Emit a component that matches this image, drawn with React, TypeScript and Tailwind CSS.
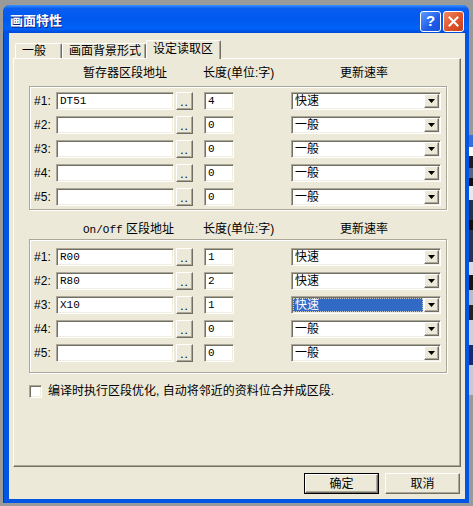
import React from "react";

const ui = "font-['Liberation_Sans','Noto_Sans_CJK_SC',sans-serif]";
const mono = "font-['Liberation_Mono','Noto_Sans_CJK_SC',monospace]";

const sunken =
  "border border-t-[#aca899] border-l-[#aca899] border-b-white border-r-white shadow-[inset_1px_1px_0_#716f64,inset_-1px_-1px_0_#f1efe2] bg-white";
const raised =
  "border border-t-white border-l-white border-b-[#716f64] border-r-[#716f64] shadow-[inset_-1px_-1px_0_#aca899] bg-[#ece9d8]";

type RowData = { addr: string; len: string; rate: string; selected?: boolean };

const bufferRows: RowData[] = [
  { addr: "DT51", len: "4", rate: "快速" },
  { addr: "", len: "0", rate: "一般" },
  { addr: "", len: "0", rate: "一般" },
  { addr: "", len: "0", rate: "一般" },
  { addr: "", len: "0", rate: "一般" },
];

const onOffRows: RowData[] = [
  { addr: "R00", len: "1", rate: "快速" },
  { addr: "R80", len: "2", rate: "快速" },
  { addr: "X10", len: "1", rate: "快速", selected: true },
  { addr: "", len: "0", rate: "一般" },
  { addr: "", len: "0", rate: "一般" },
];

// background app peeking out right of the dialog
const strip: [number, string][] = [
  [135, "#9a9a9a"],
  [12, "#3a6fd8"],
  [9, "#ffffff"],
  [12, "#1b1b2a"],
  [10, "#5a6480"],
  [8, "#101010"],
  [14, "#e8e8f0"],
  [20, "#26324a"],
  [10, "#101010"],
  [32, "#2a3450"],
  [13, "#dcdce8"],
  [15, "#151515"],
  [15, "#b8bccc"],
  [15, "#222222"],
  [25, "#d0d0dc"],
  [20, "#1a2a6a"],
  [30, "#c8c8d8"],
  [111, "#9a9a9a"],
];

function Arrow() {
  return (
    <svg width="7" height="4" viewBox="0 0 7 4">
      <polygon points="0,0 7,0 3.5,4" fill="#000" />
    </svg>
  );
}

function Row({ n, row }: { n: number; row: RowData }) {
  return (
    <div className="flex items-center h-[18px]">
      <span className="w-[22px] text-[12px] leading-[14px]">#{n}:</span>
      <div className={`w-[118px] h-[18px] ${sunken} flex items-center pl-[3px]`}>
        <span className={`${mono} text-[11px] leading-[14px]`}>{row.addr}</span>
      </div>
      <div className={`ml-[2px] w-[17px] h-[18px] ${raised} flex items-end justify-center`}>
        <span className="text-[12px] leading-[13px] tracking-[1px]">..</span>
      </div>
      <div className={`ml-[11px] w-[30px] h-[18px] ${sunken} flex items-center pl-[3px]`}>
        <span className={`${mono} text-[11px] leading-[14px]`}>{row.len}</span>
      </div>
      <div className={`ml-[57px] w-[150px] h-[18px] ${sunken} flex p-[1px]`}>
        <div className="flex-1 flex items-stretch pr-[1px]">
          {row.selected ? (
            <div className="flex-1 bg-[#316ac5] border border-dotted border-[#c9c9c9] flex items-center pl-[1px] text-white text-[12px] leading-[14px]">
              {row.rate}
            </div>
          ) : (
            <div className="flex-1 flex items-center pl-[2px] text-[12px] leading-[14px]">{row.rate}</div>
          )}
        </div>
        <div className={`w-[15px] h-[14px] ${raised} flex items-center justify-center`}>
          <Arrow />
        </div>
      </div>
    </div>
  );
}

function Group({ rows, pt, pb }: { rows: RowData[]; pt: string; pb: string }) {
  return (
    <div
      className={`w-[418px] border border-[#aca899] shadow-[inset_1px_1px_0_#fff,1px_1px_0_#fff] pl-[4px] ${pt} ${pb} flex flex-col gap-[6px]`}
    >
      {rows.map((r, i) => (
        <Row key={i} n={i + 1} row={r} />
      ))}
    </div>
  );
}

function Tab({ label, w, selected }: { label: string; w: string; selected?: boolean }) {
  return (
    <div
      className={`${w} ${
        selected ? "h-[19px] bg-[#ece9d8] pb-[3px]" : "h-[15px] mb-[1px] bg-[#ece9d8]"
      } border-t border-l border-r border-t-white border-l-white border-r-[#716f64] shadow-[inset_-1px_0_0_#aca899] rounded-t-[2px] flex items-center pl-[6px] text-[12px] leading-[14px]`}
    >
      {label}
    </div>
  );
}

export default function App() {
  return (
    <div className={`w-[473px] h-[506px] bg-[#9a9a9a] flex flex-col overflow-hidden ${ui} text-black`}>
      <div className="h-[5px]" />
      <div className="flex">
        <div className="w-[3px]" />
        {/* dialog window */}
        <div className="w-[466px] h-[498px] flex flex-col rounded-t-[7px] overflow-hidden bg-[#0055e5]">
          <div className="h-[28px] flex items-center pt-[4px] pl-[7px] pr-[5px] bg-[linear-gradient(180deg,#3d95ff_0%,#0a5ef0_12%,#0058ee_50%,#0062f8_85%,#0048d8_100%)]">
            <span className="flex-1 text-white font-bold text-[13px] leading-[16px] [text-shadow:1px_1px_0_#0a1e8a]">
              画面特性
            </span>
            <div className="w-[21px] h-[21px] rounded-[3px] border border-white bg-[linear-gradient(135deg,#5a9bff,#1f5ce8_60%,#1a4fd6)] flex items-center justify-center">
              <span className="text-white font-bold text-[15px] leading-[16px] font-['Liberation_Sans',sans-serif]">?</span>
            </div>
            <div className="ml-[2px] w-[21px] h-[21px] rounded-[3px] border border-white bg-[linear-gradient(135deg,#f08a62,#e0532a_55%,#c4401e)] flex items-center justify-center">
              <svg width="11" height="11" viewBox="0 0 11 11">
                <path d="M1.5 1.5 L9.5 9.5 M9.5 1.5 L1.5 9.5" stroke="#fff" strokeWidth="2" strokeLinecap="square" />
              </svg>
            </div>
          </div>

          <div className="flex-1 flex pl-[5px] pr-[4px] pb-[4px] border-l border-[#0831d9]">
            {/* client area */}
            <div className="w-[457px] bg-[#ece9d8] flex flex-col pl-[4px]">
              <div className="relative z-10 h-[26px] -mb-px flex items-end pl-[2px]">
                <Tab label="一般" w="w-[47px]" />
                <Tab label="画面背景形式" w="w-[84px]" />
                <Tab label="设定读取区" w="w-[75px]" selected />
              </div>

              <div className="w-[448px] h-[409px] border border-t-white border-l-white border-b-[#716f64] border-r-[#716f64] shadow-[inset_-1px_-1px_0_#aca899] flex flex-col pl-[15px]">
                <div className="mt-[7px] mb-[6px] h-[14px] flex text-[12px] leading-[14px]">
                  <span className="ml-[54px] w-[120px]">暂存器区段地址</span>
                  <span className="w-[137px]">长度(单位:字)</span>
                  <span>更新速率</span>
                </div>
                <Group rows={bufferRows} pt="pt-[5px]" pb="pb-[3px]" />

                <div className="mt-[12px] mb-[3px] h-[14px] flex text-[12px] leading-[14px]">
                  <span className="ml-[54px] w-[120px]">
                    <span className={`${mono} text-[11px]`}>On/Off</span> 区段地址
                  </span>
                  <span className="w-[137px]">长度(单位:字)</span>
                  <span>更新速率</span>
                </div>
                <Group rows={onOffRows} pt="pt-[8px]" pb="pb-[10px]" />

                <div className="mt-[11px] flex items-center">
                  <div className={`w-[13px] h-[13px] ${sunken}`} />
                  <span className="ml-[6px] text-[12px] leading-[14px]">
                    编译时执行区段优化, 自动将邻近的资料位合并成区段.
                  </span>
                </div>
              </div>

              <div className="mt-[6px] flex justify-end pr-[5px] gap-[6px]">
                <div className="w-[75px] h-[21px] border border-black">
                  <div className={`h-full ${raised} flex items-center justify-center text-[12px] leading-[14px]`}>确定</div>
                </div>
                <div className={`w-[75px] h-[21px] ${raised} flex items-center justify-center text-[12px] leading-[14px]`}>
                  取消
                </div>
              </div>
            </div>
          </div>
        </div>
        <div className="w-[4px] flex flex-col -mt-[5px]">
          {strip.map(([h, c], i) => (
            <div key={i} style={{ height: h, background: c }} />
          ))}
        </div>
      </div>
    </div>
  );
}
